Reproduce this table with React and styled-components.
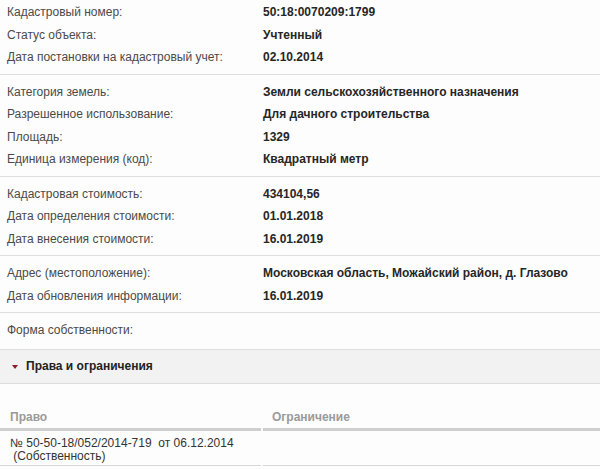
import React from "react";
import styled, { createGlobalStyle } from "styled-components";

const GlobalStyle = createGlobalStyle`
  html, body {
    margin: 0;
    padding: 0;
    background: #fdfdfd;
  }
  body {
    font-family: "Liberation Sans", Arial, sans-serif;
    font-size: 12px;
    color: #333;
  }
`;

const Page = styled.div`
  width: 600px;
  height: 469px;
  overflow: hidden;
`;

const Group = styled.div`
  padding: ${(p) => p.$top}px 0 ${(p) => p.$bottom}px;
  border-bottom: 1px solid #dedede;
`;

const Row = styled.div`
  display: grid;
  grid-template-columns: 263px 1fr;
  height: 22.5px;
  align-items: center;
`;

const Label = styled.div`
  padding-left: 7px;
  color: #4a4a4a;
`;

const Value = styled.div`
  font-weight: bold;
  color: #262626;
`;

const SectionHeader = styled.div`
  display: flex;
  align-items: center;
  gap: 8px;
  height: 33px;
  padding-left: 12px;
  background: #f3f2f2;
  border-bottom: 1px solid #dcdcdc;
  font-weight: bold;
  color: #222;
`;

const Caret = styled.span`
  width: 0;
  height: 0;
  border-left: 3.5px solid transparent;
  border-right: 3.5px solid transparent;
  border-top: 4px solid #8c1c2c;
  margin-top: 1px;
`;

const Table = styled.div`
  margin-top: 22px;
  display: grid;
  grid-template-columns: 261px 1fr;
  column-gap: 2px;
`;

const HeadCell = styled.div`
  padding: 0 0 4px ${(p) => p.$pad}px;
  height: 18px;
  display: flex;
  align-items: flex-end;
  border-bottom: 3px solid #cfcfcf;
  color: #9a9a9a;
  font-weight: bold;
`;

const BodyCell = styled.div`
  padding: 6px 0 1px 10px;
  line-height: 13.5px;
  height: 27px;
  border-bottom: 1px solid #d6d6d6;
  color: #333;
  white-space: pre;
`;

const groups = [
  {
    top: 1,
    bottom: 5,
    rows: [
      ["Кадастровый номер:", "50:18:0070209:1799"],
      ["Статус объекта:", "Учтенный"],
      ["Дата постановки на кадастровый учет:", "02.10.2014"],
    ],
  },
  {
    top: 6,
    bottom: 5,
    rows: [
      ["Категория земель:", "Земли сельскохозяйственного назначения"],
      ["Разрешенное использование:", "Для дачного строительства"],
      ["Площадь:", "1329"],
      ["Единица измерения (код):", "Квадратный метр"],
    ],
  },
  {
    top: 6,
    bottom: 5,
    rows: [
      ["Кадастровая стоимость:", "434104,56"],
      ["Дата определения стоимости:", "01.01.2018"],
      ["Дата внесения стоимости:", "16.01.2019"],
    ],
  },
  {
    top: 6,
    bottom: 5,
    rows: [
      ["Адрес (местоположение):", "Московская область, Можайский район, д. Глазово"],
      ["Дата обновления информации:", "16.01.2019"],
    ],
  },
  {
    top: 6,
    bottom: 7,
    rows: [["Форма собственности:", ""]],
  },
];

export default function App() {
  return (
    <Page>
      <GlobalStyle />
      {groups.map((g, i) => (
        <Group key={i} $top={g.top} $bottom={g.bottom}>
          {g.rows.map(([label, value]) => (
            <Row key={label}>
              <Label>{label}</Label>
              <Value>{value}</Value>
            </Row>
          ))}
        </Group>
      ))}
      <SectionHeader>
        <Caret />
        Права и ограничения
      </SectionHeader>
      <Table>
        <HeadCell $pad={10}>Право</HeadCell>
        <HeadCell $pad={9}>Ограничение</HeadCell>
        <BodyCell>{"№ 50-50-18/052/2014-719  от 06.12.2014\n (Собственность)"}</BodyCell>
        <BodyCell />
      </Table>
    </Page>
  );
}
